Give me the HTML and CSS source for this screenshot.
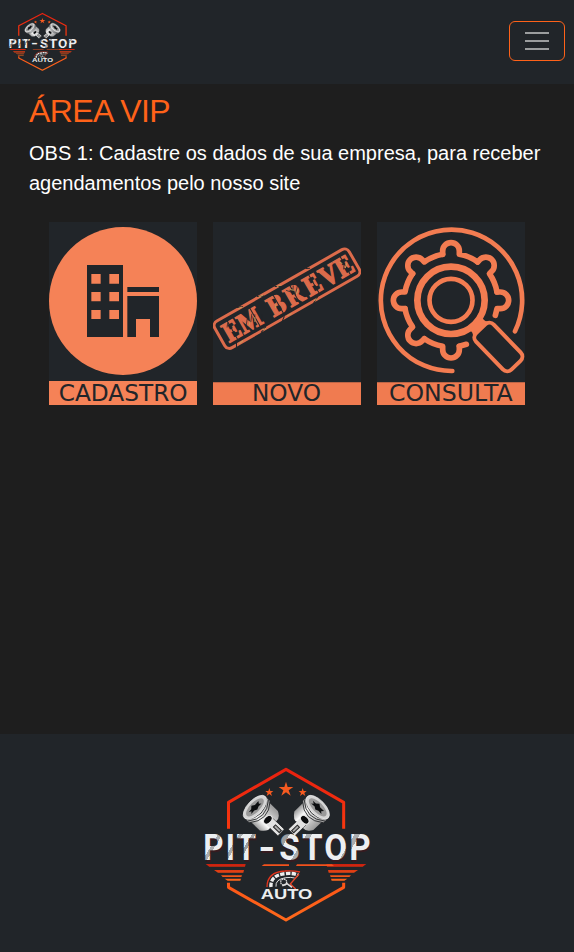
FILE: index.html
```html
<!DOCTYPE html>
<html lang="pt-BR">
<head>
<meta charset="utf-8">
<meta name="viewport" content="width=device-width, initial-scale=1">
<title>Pit-Stop Auto</title>
<link rel="stylesheet" href="styles.css">
</head>
<body>
<svg class="defs" aria-hidden="true">
  <defs>
    <linearGradient id="fire" gradientUnits="userSpaceOnUse" x1="0" y1="38" x2="0" y2="500"><stop offset="0" stop-color="#e9200f"/><stop offset=".4" stop-color="#f8380f"/><stop offset="1" stop-color="#ff6a1c"/></linearGradient>
    <linearGradient id="wing" gradientUnits="userSpaceOnUse" x1="0" y1="325" x2="0" y2="378"><stop offset="0" stop-color="#c91c0d"/><stop offset="1" stop-color="#ff6a1c"/></linearGradient>
    <linearGradient id="metal" x1="0" x2="1" y1="0" y2="0"><stop offset="0" stop-color="#999"/><stop offset=".3" stop-color="#f8f8f8"/><stop offset=".65" stop-color="#ccc"/><stop offset="1" stop-color="#999"/></linearGradient>
    <linearGradient id="chrome" gradientUnits="userSpaceOnUse" x1="0" y1="277" x2="408" y2="522">
      <stop offset=".083" stop-color="#eceff1"/><stop offset=".083" stop-color="#a9acaf"/><stop offset=".105" stop-color="#a9acaf"/><stop offset=".105" stop-color="#eceff1"/>
      <stop offset=".195" stop-color="#eceff1"/><stop offset=".195" stop-color="#a9acaf"/><stop offset=".216" stop-color="#a9acaf"/><stop offset=".216" stop-color="#eceff1"/>
      <stop offset=".265" stop-color="#eceff1"/><stop offset=".265" stop-color="#9b9ea1"/><stop offset=".285" stop-color="#9b9ea1"/><stop offset=".285" stop-color="#eceff1"/>
      <stop offset=".435" stop-color="#eceff1"/><stop offset=".435" stop-color="#9b9ea1"/><stop offset=".47" stop-color="#9b9ea1"/><stop offset=".47" stop-color="#eceff1"/>
      <stop offset=".56" stop-color="#eceff1"/><stop offset=".56" stop-color="#a9acaf"/><stop offset=".59" stop-color="#a9acaf"/><stop offset=".59" stop-color="#eceff1"/>
      <stop offset=".82" stop-color="#eceff1"/><stop offset=".82" stop-color="#a9acaf"/><stop offset=".85" stop-color="#a9acaf"/><stop offset=".85" stop-color="#eceff1"/>
    </linearGradient>
    <g id="piston">
      <path d="M-14 55H14V106H-14Z" fill="#e2e2e2" stroke="#16181b" stroke-width="2"/>
      <path d="M-4 78H5V102H-4Z" fill="#aaa" stroke="#222" stroke-width="3"/>
      <path d="M-40 20V56Q-24 78-12 72V60H14V72Q30 74 40 54V20Z" fill="url(#metal)"/>
      <ellipse cx="0" cy="51" rx="15" ry="10" fill="#0b0c0e" stroke="#eee" stroke-width="3"/>
      <path d="M-45 0V16Q0 52 45 16V0Z" fill="url(#metal)"/>
      <path d="M-45 3Q0 42 45 3M-45 10Q0 49 45 10M-45 17Q0 56 45 17" fill="none" stroke="#25272a" stroke-width="2.500"/>
      <ellipse cy="-3" rx="45" ry="22" fill="#d4d4d4" stroke="#f1f1f1" stroke-width="2"/>
      <ellipse cy="-3" rx="35" ry="15" fill="#999"/>
      <path d="M-24-6L-12-7-4-14 5-8 21-9 16-2 22 3 9 3 0 7-8 2-22 3-16-2Z" fill="#0c0e10"/>
    </g>
    <symbol id="logo" viewBox="0 0 555 525" preserveAspectRatio="none">
      <g fill="none" stroke="url(#fire)" stroke-width="9" stroke-linejoin="round">
        <path d="M100.500 221V142L273 43 446 142V221"/>
        <path d="M100.500 383V397L273 495 446 397V383"/>
      </g>
      <path fill="#f65a20" d="M273 80L278 96H295L281 106 287 122 273 112 259 122 265 106 251 96H268ZM223 99L226 108H235L228 114 231 123 223 117 215 123 218 114 211 108H220ZM323 99L326 108H335L328 114 331 123 323 117 315 123 318 114 311 108H320Z"/>
      <use href="#piston" transform="translate(182 159) rotate(-46)"/>
      <use href="#piston" transform="translate(366 159) rotate(46)"/>
      <g class="logo-shadow">
        <text x="28" y="320" textLength="164" lengthAdjust="spacingAndGlyphs">PIT</text>
        <text x="193" y="320" textLength="60" lengthAdjust="spacingAndGlyphs">-</text>
        <text x="255" y="320" textLength="280" lengthAdjust="spacingAndGlyphs">STOP</text>
      </g>
      <g class="logo-name">
        <text x="25" y="316" textLength="164" lengthAdjust="spacingAndGlyphs">PIT</text>
        <text x="190" y="316" textLength="60" lengthAdjust="spacingAndGlyphs">-</text>
        <text x="253" y="316" textLength="280" lengthAdjust="spacingAndGlyphs">STOP</text>
      </g>
      <g id="wing-left" fill="url(#wing)">
        <path d="M32 327H152L150 335H43ZM57 345H147L145 353H69ZM78 361H141L139 366H83ZM89 371H138L136 377H98Z"/>
      </g>
      <use href="#wing-left" transform="translate(546 0) scale(-1 1)"/>
      <path d="M207 328H282V333H200ZM306 328H411L417 333H303Z" fill="#f2521c"/>
      <g fill="none">
        <path d="M216 396Q216 351 270 348Q295 346 315 351" stroke="#e3341c" stroke-width="4"/>
        <path d="M228 396Q225 361 271 356Q295 353 310 361" stroke="#eee" stroke-width="10" stroke-dasharray="13 4"/>
        <path d="M243 395Q240 373 272 368Q289 366 299 369" stroke="#ddd" stroke-width="3"/>
        <path d="M312 357L286 387 302 402" stroke="#e9472a" stroke-width="4"/>
        <circle cx="266" cy="381" r="9" stroke="#ddd" stroke-width="4" stroke-dasharray="5 2"/>
        <path d="M262 392L276 386 291 397" stroke="#ddd" stroke-width="5"/>
      </g>
      <text class="logo-auto" x="197" y="433" textLength="155" lengthAdjust="spacingAndGlyphs">AUTO</text>
    </symbol>
  </defs>
</svg>

<header class="navbar">
  <svg class="brand" role="img" aria-label="Pit-Stop Auto"><use href="#logo"/></svg>
  <button class="toggler" aria-label="Menu"><span></span><span></span><span></span></button>
</header>

<main class="content">
  <h1>ÁREA VIP</h1>
  <p>OBS 1: Cadastre os dados de sua empresa, para receber agendamentos pelo nosso site</p>
  <div class="cards">
    <svg class="card" viewBox="0 0 444 549">
      <circle cx="222" cy="237" r="222" fill="#f58257"/>
      <path fill="#212529" fill-rule="evenodd" d="M114 129H222V345H114ZM127 156V185H155V156ZM181 156V185H210V156ZM127 210V238H155V210ZM181 210V238H210V210ZM127 264V291H155V264ZM181 264V291H210V264ZM235 195H330V210H235ZM235 222H330V345H303V291H261V345H235Z"/>
      <path d="M0 477H444V549H0Z" fill="#f58257"/>
      <text class="label" x="29" y="538" textLength="387" lengthAdjust="spacingAndGlyphs">CADASTRO</text>
    </svg>
    <svg class="card" viewBox="0 0 444 549">
      <g transform="translate(222 230) rotate(-29.700)">
        <rect x="-232" y="-46" width="464" height="92" rx="16" fill="none" stroke="#dc6b4b" stroke-width="9"/>
        <text class="stamp" transform="scale(.87 1)" x="-220 -149 -90 -43 28 101 166 227" y="29">EM BREVE</text>
        <g fill="none" stroke="#212529" stroke-width="3">
          <path d="M-189-32V32M-111-32V32M-31-32V32M27-32V32M92-32V32M201-32V32"/>
          <path stroke-width="2" d="M-146 9l12-15 5 13 15-20M-126 24l19-31M-98 18l10-15M10-23l14 16 12-18M26 4l22-24M191 8l10-15M-199-14l9-12M203-20l12 14"/>
          <path d="M-144-52l17 7M-75-50l20 9M-14-50l16 9M93-51l12 6M-204 52l7-13M-118 50l22-9M-45 51l12-9M63 51l19-10"/>
        </g>
        <path d="M-139 14l9-10M-118 13l7-13M-44 8l7-10M20-20l12 9M31 2l12-10M191-18l5 9M197 7l13-12M-191 46l14-2M-111 45l12 1M-25 45l15 1M67 46l12-1M-142-46l13 1M-72-46l15 1M-9-46l13 1" stroke="#c79b5c" stroke-width="3" fill="none"/>
      </g>
      <path d="M0 481H444V549H0Z" fill="#f07b50"/>
      <text class="label" x="117" y="538" textLength="207" lengthAdjust="spacingAndGlyphs">NOVO</text>
    </svg>
    <svg class="card" viewBox="21 21 444 549">
      <g fill="none" stroke="#f37c51" stroke-linecap="round" stroke-linejoin="round">
        <path stroke-width="14" d="M435 349A212 212 0 1 0 247 468"/>
        <g stroke-width="17">
          <path id="tooth" d="M218 118V108a25 25 0 0 1 50 0V118A140 140 0 0 1 322.900 140.700"/>
          <use href="#tooth" transform="rotate(45 243 256)"/>
          <use href="#tooth" transform="rotate(180 243 256)"/>
          <use href="#tooth" transform="rotate(225 243 256)"/>
          <use href="#tooth" transform="rotate(270 243 256)"/>
          <use href="#tooth" transform="rotate(315 243 256)"/>
          <path d="M381 231H391a25 25 0 0 1 0 50H381L376 301"/>
          <path d="M268 394L289 388"/>
        </g>
        <circle cx="243" cy="256" r="101" stroke-width="20"/>
        <circle cx="243" cy="256" r="64.500" stroke-width="14"/>
        <rect x="-76" y="-37" width="152" height="74" rx="18" stroke-width="12" transform="translate(385 396) rotate(46)"/>
      </g>
      <path d="M301 346L335 308 345 317 355 322 311 367 307 353Z" fill="#f37c51"/>
      <path d="M21 502H465V570H21Z" fill="#f07b50"/>
      <text class="label" x="57" y="559" textLength="371" lengthAdjust="spacingAndGlyphs">CONSULTA</text>
    </svg>
  </div>
</main>

<footer class="footer">
  <svg class="footer-logo" role="img" aria-label="Pit-Stop Auto"><use href="#logo"/></svg>
</footer>
</body>
</html>
```
FILE: styles.css
```css
* { box-sizing: border-box; }

body {
  margin: 0;
  min-height: 100vh;
  display: flex;
  flex-direction: column;
  background: #1e1e1e;
  color: #fff;
  font-family: "Liberation Sans", Arial, sans-serif;
}

.defs { width: 0; height: 0; position: absolute; }

.navbar {
  height: 84px;
  padding: 0 9px 0 5px;
  display: flex;
  align-items: center;
  justify-content: space-between;
  background: #212529;
}

.brand { width: 76px; height: 66px; margin-bottom: 3px; }

.toggler {
  width: 56px;
  height: 40px;
  margin-bottom: 2px;
  padding: 0 15px;
  display: flex;
  flex-direction: column;
  justify-content: center;
  gap: 6px;
  background: transparent;
  border: 1px solid #ff6219;
  border-radius: 6px;
}

.toggler span { height: 2px; background: #9b9d9e; }

.content { flex: 1; padding: 8px 29px 0; }

h1 {
  margin: 0 0 8px;
  color: #ff6219;
  font-size: 32px;
  font-weight: 400;
  line-height: 38px;
  letter-spacing: -0.6px;
}

p { margin: 0; font-size: 20px; line-height: 30px; }

.cards {
  margin-top: 24px;
  display: flex;
  justify-content: center;
  gap: 16px;
}

.card { width: 148px; height: 183px; background: #212529; }

.label { font: 69px "DejaVu Sans", Verdana, sans-serif; fill: #212529; }

.stamp {
  font: bold 86px "Liberation Serif", serif;
  fill: #dc6b4b;
  stroke: #dc6b4b;
  stroke-width: 4px;
  text-anchor: middle;
}

.logo-name { font: bold 108px Roboto, sans-serif; letter-spacing: 7px; fill: url(#chrome); }

.logo-shadow { font: bold 108px Roboto, sans-serif; letter-spacing: 7px; fill: #351b20; }

.logo-auto { font: bold 42px "Liberation Sans", Arial, sans-serif; fill: #eceeef; }

.footer {
  height: 218px;
  padding-top: 21px;
  display: flex;
  justify-content: center;
  background: #212529;
}

.footer-logo { width: 185px; height: 175px; }
```
